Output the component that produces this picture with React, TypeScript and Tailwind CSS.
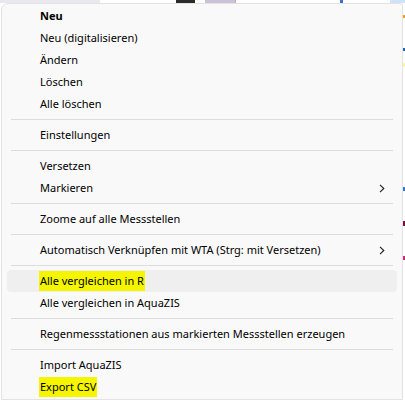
import React from "react";

type Item =
  | { type: "sep" }
  | { type: "item"; label: string; bold?: boolean; sub?: boolean; hover?: boolean; mark?: boolean };

const items: Item[] = [
  { type: "item", label: "Neu", bold: true },
  { type: "item", label: "Neu (digitalisieren)" },
  { type: "item", label: "Ändern" },
  { type: "item", label: "Löschen" },
  { type: "item", label: "Alle löschen" },
  { type: "sep" },
  { type: "item", label: "Einstellungen" },
  { type: "sep" },
  { type: "item", label: "Versetzen" },
  { type: "item", label: "Markieren", sub: true },
  { type: "sep" },
  { type: "item", label: "Zoome auf alle Messstellen" },
  { type: "sep" },
  { type: "item", label: "Automatisch Verknüpfen mit WTA (Strg: mit Versetzen)", sub: true },
  { type: "sep" },
  { type: "item", label: "Alle vergleichen in R", hover: true, mark: true },
  { type: "item", label: "Alle vergleichen in AquaZIS" },
  { type: "sep" },
  { type: "item", label: "Regenmessstationen aus markierten Messstellen erzeugen" },
  { type: "sep" },
  { type: "item", label: "Import AquaZIS" },
  { type: "item", label: "Export CSV", mark: true },
];

function Chevron() {
  return (
    <svg width="6" height="9" viewBox="0 0 6 9" className="shrink-0">
      <path d="M1 0.8 L4.8 4.5 L1 8.2" fill="none" stroke="#1f1f1f" strokeWidth="1.1" />
    </svg>
  );
}

export default function App() {
  return (
    <div className="w-[405px] h-[400px] overflow-hidden bg-white flex flex-col" style={{ fontFamily: '"Noto Sans", "Open Sans", sans-serif' }}>
      {/* background window peeking out at the top */}
      <div className="h-[3px] flex shrink-0">
        <div className="w-[100px] bg-[#e8e8ee]" />
        <div className="w-[76px] bg-white" />
        <div className="w-[19px] bg-[#2b2b2b]" />
        <div className="w-[10px] bg-white" />
        <div className="w-[30px] bg-[#c9c3d8]" />
        <div className="w-[105px] bg-white border-l border-[#cfa3c9]" />
        <div className="w-[3px] bg-[#3b6fd6]" />
        <div className="w-[47px] bg-white" />
        <div className="flex-1 bg-[#cfe3f7]" />
      </div>

      <div className="flex flex-1 min-h-0">
        <div className="w-px shrink-0" />
        {/* context menu */}
        <div className="w-[402px] shrink-0 bg-[#f9f9f9] border border-[#e3e3e3] rounded-tl-[7px] rounded-tr-[3px] pt-[1px] text-[11px] text-black">
          {items.map((it, i) =>
            it.type === "sep" ? (
              <div key={i} className="h-[9px] flex items-center px-[9px]">
                <div className="h-px w-full bg-[#dcdcdc]" />
              </div>
            ) : (
              <div key={i} className={`h-[22px] mx-[5px] flex items-center rounded-[4px] pl-[33px] pr-[12px] ${it.hover ? "bg-[#efefef]" : ""}`}>
                <span className={`leading-[20px] px-px -mx-px ${it.bold ? "font-bold" : ""} ${it.mark ? "bg-[#f5f500]" : ""}`}>{it.label}</span>
                <div className="flex-1" />
                {it.sub && <Chevron />}
              </div>
            )
          )}
        </div>
        <div className="flex-1 flex flex-col">
          <div className="h-[12px]" />
          <div className="h-[3px] bg-[#f0a020]" />
          <div className="h-[30px]" />
          <div className="h-[3px] bg-[#2060c0]" />
          <div className="h-[12px]" />
          <div className="h-[4px] bg-[#fff3a0]" />
          <div className="h-[120px]" />
          <div className="h-[4px] bg-[#2d7bd8]" />
          <div className="h-[30px]" />
          <div className="h-[5px] bg-[#7a1040]" />
          <div className="h-[30px]" />
          <div className="h-[4px] bg-[#d0287a]" />
        </div>
      </div>
    </div>
  );
}
